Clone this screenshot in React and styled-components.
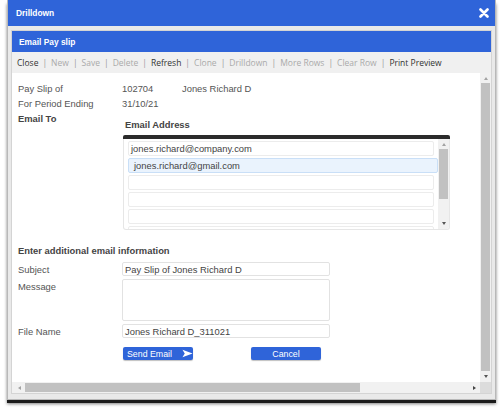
import styled, { createGlobalStyle } from 'styled-components';

const GlobalStyle = createGlobalStyle`
  html, body {
    margin: 0;
    padding: 0;
    background: #ffffff;
  }
  body {
    font-family: "Liberation Sans", Arial, sans-serif;
  }
`;

const Page = styled.div`
  width: 503px;
  height: 411px;
  padding: 0 0 0 7px;
  box-sizing: border-box;
`;

const Dialog = styled.div`
  width: 489px;
  height: 400px;
  box-sizing: border-box;
  background: #e9e9e9;
  border: 1px solid #b8b8b8;
  border-top: none;
  box-shadow: 0 3px 0 #1b1b1b, 0 4px 3px rgba(0, 0, 0, 0.5);
  display: flex;
  flex-direction: column;
`;

const TitleBar = styled.div`
  height: 26px;
  background: #2f64d9;
  display: flex;
  align-items: center;
  justify-content: space-between;
  padding: 0 6px 0 8px;
  color: #fff;
  font-weight: bold;
  font-size: 8.4px;
`;

const CloseX = styled.svg`
  width: 10px;
  height: 10px;
`;

const Body = styled.div`
  flex: 1;
  padding: 4px 3px 5px 3px;
  display: flex;
  min-height: 0;
`;

const Panel = styled.div`
  flex: 1;
  display: flex;
  flex-direction: column;
  background: #fff;
  border: 1px solid #d4d4d4;
`;

const PanelHeader = styled.div`
  height: 21px;
  background: #2f64d9;
  color: #fff;
  font-weight: bold;
  font-size: 8.4px;
  display: flex;
  align-items: center;
  padding-left: 7px;
`;

const Toolbar = styled.div`
  height: 21px;
  background: #f0f0f0;
  display: flex;
  align-items: center;
  padding-left: 5px;
  font-family: "Open Sans", "Liberation Sans", sans-serif;
  font-size: 8.5px;
  white-space: nowrap;
`;

const ToolItem = styled.span`
  color: ${(p) => (p.$enabled ? '#333' : '#aaa')};
  &:not(:last-child)::after {
    content: '|';
    color: #999;
    margin: 0 4px;
  }
`;

const ScrollFrame = styled.div`
  flex: 1;
  display: grid;
  grid-template-columns: 1fr 11px;
  grid-template-rows: 1fr 11px;
  min-height: 0;
`;

const Content = styled.div`
  padding: 8px 0 0 6px;
  font-size: 9.4px;
  color: #555;
  overflow: hidden;
  white-space: nowrap;
`;

const InfoRow = styled.div`
  display: flex;
  height: 15px;
  align-items: center;
`;

const Label = styled.div`
  width: 104px;
  font-weight: ${(p) => (p.$bold ? 'bold' : 'normal')};
  color: ${(p) => (p.$bold ? '#444' : '#555')};
`;

const Value = styled.div`
  width: ${(p) => p.$w || 'auto'};
`;

const EmailBlock = styled.div`
  margin: -10px 0 0 105px;
  width: 327px;
`;

const EmailTitle = styled.div`
  font-weight: bold;
  color: #444;
  padding-left: 2px;
  height: 16px;
  display: flex;
  align-items: center;
`;

const GridTop = styled.div`
  height: 4px;
  background: #2b2b2b;
  border-radius: 2px 2px 0 0;
  margin-top: 3px;
`;

const Grid = styled.div`
  height: 90px;
  display: flex;
  border: 1px solid #e6e6e6;
  border-top: none;
  border-radius: 0 0 3px 3px;
  overflow: hidden;
`;

const GridRows = styled.div`
  flex: 1;
  padding: 2px 4px 0 4px;
  display: flex;
  flex-direction: column;
  gap: 2px;
`;

const GridRow = styled.div`
  height: 13px;
  flex-shrink: 0;
  border: 1px solid ${(p) => (p.$selected ? '#c9dff7' : '#ececec')};
  background: ${(p) => (p.$selected ? '#eaf3fd' : '#fff')};
  border-radius: 2px;
  display: flex;
  align-items: center;
  padding-left: ${(p) => (p.$selected ? '5px' : '2px')};
  margin-right: ${(p) => (p.$selected ? '-4px' : '0')};
  color: #444;
`;

const VBar = styled.div`
  width: ${(p) => p.$w || 10}px;
  background: #f1f1f1;
  display: flex;
  flex-direction: column;
  align-items: center;
`;

const Arrow = styled.div`
  width: 0;
  height: 0;
  border-left: 2.5px solid transparent;
  border-right: 2.5px solid transparent;
  ${(p) => (p.$down ? 'border-top: 3px solid #555;' : 'border-bottom: 3px solid #a3a3a3;')}
  margin: ${(p) => (p.$down ? '4px 0 4px' : '4px 0 3px')};
`;

const HArrow = styled.div`
  width: 0;
  height: 0;
  border-top: 2.5px solid transparent;
  border-bottom: 2.5px solid transparent;
  ${(p) => (p.$right ? 'border-left: 3px solid #444;' : 'border-right: 3px solid #a3a3a3;')}
  margin: 0 4px;
`;

const Thumb = styled.div`
  background: #c1c1c1;
  width: ${(p) => p.$w || '100%'};
  height: ${(p) => p.$h || '100%'};
  flex: ${(p) => p.$flex || 'none'};
`;

const Spacer = styled.div`
  flex: 1;
`;

const SectionTitle = styled.div`
  font-weight: bold;
  color: #444;
  margin: 15px 0 6px 0;
`;

const FormRow = styled.div`
  display: flex;
  align-items: flex-start;
  margin-bottom: 3px;
`;

const FormLabel = styled.div`
  width: 104px;
  padding-top: 2px;
`;

const Field = styled.div`
  width: 204px;
  height: ${(p) => p.$h || 12}px;
  border: 1px solid #e2e2e2;
  border-radius: 2px;
  padding-left: 2px;
  color: #444;
  display: flex;
  align-items: ${(p) => (p.$h ? 'flex-start' : 'center')};
  box-sizing: content-box;
`;

const ButtonRow = styled.div`
  display: flex;
  margin: 9px 0 0 105px;
  gap: 58px;
`;

const Button = styled.div`
  width: 70px;
  height: 13px;
  background: #2f64d9;
  border-radius: 2px;
  color: #fff;
  font-size: 8.8px;
  display: flex;
  align-items: center;
  justify-content: ${(p) => (p.$icon ? 'flex-start' : 'center')};
  padding-left: ${(p) => (p.$icon ? '4px' : '0')};
  box-sizing: border-box;
  box-shadow: 0 1px 1px rgba(0, 0, 0, 0.25);
  gap: 10px;
`;

const HBar = styled.div`
  background: #f1f1f1;
  display: flex;
  align-items: center;
  padding-left: 2px;
`;

const Corner = styled.div`
  background: #dcdcdc;
`;

const tools = [
  ['Close', true],
  ['New', false],
  ['Save', false],
  ['Delete', false],
  ['Refresh', true],
  ['Clone', false],
  ['Drilldown', false],
  ['More Rows', false],
  ['Clear Row', false],
  ['Print Preview', true],
];

export default function App() {
  return (
    <>
      <GlobalStyle />
      <Page>
        <Dialog>
          <TitleBar>
            <span>Drilldown</span>
            <CloseX viewBox="0 0 10 10">
              <path d="M1.5 1.5 L8.5 8.5 M8.5 1.5 L1.5 8.5" stroke="#fff" strokeWidth="2.6" strokeLinecap="round" />
            </CloseX>
          </TitleBar>
          <Body>
            <Panel>
              <PanelHeader>Email Pay slip</PanelHeader>
              <Toolbar>
                {tools.map(([name, enabled]) => (
                  <ToolItem key={name} $enabled={enabled}>
                    {name}
                  </ToolItem>
                ))}
              </Toolbar>
              <ScrollFrame>
                <Content>
                  <InfoRow>
                    <Label>Pay Slip of</Label>
                    <Value $w="60px">102704</Value>
                    <Value>Jones Richard D</Value>
                  </InfoRow>
                  <InfoRow>
                    <Label>For Period Ending</Label>
                    <Value>31/10/21</Value>
                  </InfoRow>
                  <InfoRow>
                    <Label $bold>Email To</Label>
                  </InfoRow>
                  <EmailBlock>
                    <EmailTitle>Email Address</EmailTitle>
                    <GridTop />
                    <Grid>
                      <GridRows>
                        <GridRow>jones.richard@company.com</GridRow>
                        <GridRow $selected>jones.richard@gmail.com</GridRow>
                        <GridRow />
                        <GridRow />
                        <GridRow />
                        <GridRow />
                      </GridRows>
                      <VBar $w={11}>
                        <Arrow />
                        <Thumb $w="9px" $h="50px" />
                        <Spacer />
                        <Arrow $down />
                      </VBar>
                    </Grid>
                  </EmailBlock>
                  <SectionTitle>Enter additional email information</SectionTitle>
                  <FormRow>
                    <FormLabel>Subject</FormLabel>
                    <Field>Pay Slip of Jones Richard D</Field>
                  </FormRow>
                  <FormRow>
                    <FormLabel>Message</FormLabel>
                    <Field $h={40} />
                  </FormRow>
                  <FormRow>
                    <FormLabel>File Name</FormLabel>
                    <Field>Jones Richard D_311021</Field>
                  </FormRow>
                  <ButtonRow>
                    <Button $icon>
                      Send Email
                      <svg width="12" height="9" viewBox="0 0 12 9">
                        <path d="M0.5 0.5 L11.5 4.5 L0.5 8.5 L3 4.5 Z" fill="#fff" />
                      </svg>
                    </Button>
                    <Button>Cancel</Button>
                  </ButtonRow>
                </Content>
                <VBar $w={11}>
                  <Arrow />
                  <Thumb $w="9px" $flex="1" />
                  <Arrow $down />
                </VBar>
                <HBar>
                  <HArrow />
                  <Thumb $w="335px" $h="9px" />
                  <Spacer />
                  <HArrow $right />
                </HBar>
                <Corner />
              </ScrollFrame>
            </Panel>
          </Body>
        </Dialog>
      </Page>
    </>
  );
}
